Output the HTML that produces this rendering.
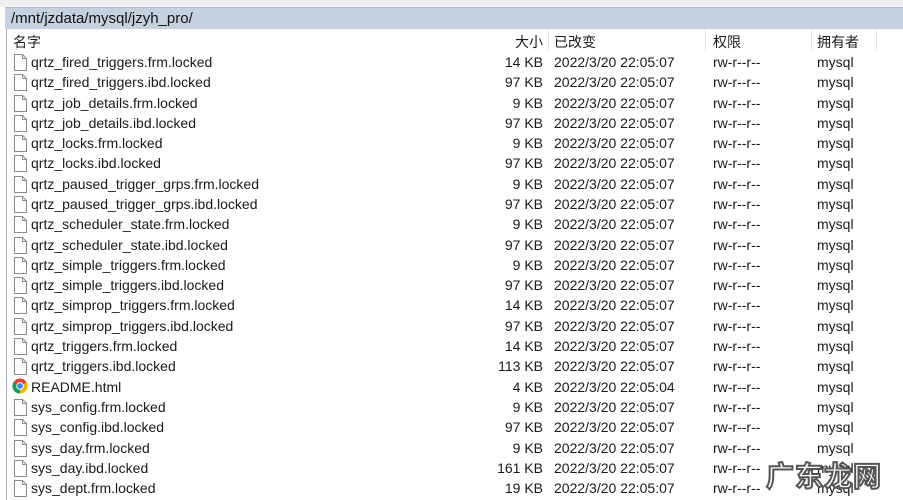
<!DOCTYPE html>
<html><head><meta charset="utf-8"><style>
*{margin:0;padding:0;box-sizing:border-box}
body{width:903px;height:500px;overflow:hidden;background:#fff;font-family:"Liberation Sans","Noto Sans CJK SC",sans-serif;font-size:14px;color:#1a1a1a;position:relative}
.tb{position:absolute;left:0;top:0;width:903px;height:7px;background:#f0f0f0}
.path{position:absolute;left:5px;top:7px;width:898px;height:22px;background:#c5d1de;border-top:1px solid #b0bccb;padding-left:6px;line-height:21px;font-size:15px;color:#111}
.panel{position:absolute;left:6px;top:29px;width:897px;height:471px;border-left:1px solid #a9b3be;background:#fff}
.hd,.r{position:absolute;left:0;height:20px;line-height:20px;white-space:nowrap}
.c1{position:absolute;left:24px}
.hd .c1{left:6px}
.c2{position:absolute;width:60px;text-align:right;left:476px}
.c3{position:absolute;left:547px}
.c4{position:absolute;left:706px}
.c5{position:absolute;left:810px}
.v{position:absolute;top:0;width:1px;height:22px;background:#e3e3e3}
.ic{position:absolute;left:7px;top:2px}
.wm{position:absolute;left:766px;top:455px;font-size:28px;font-weight:bold;color:#fff;-webkit-text-stroke:2px #555;font-family:"Noto Sans CJK SC",sans-serif;letter-spacing:1px}
</style></head><body>
<div class="tb"></div>
<div class="path">/mnt/jzdata/mysql/jzyh_pro/</div>
<div class="panel">
<div class="v" style="left:541px"></div><div class="v" style="left:698px"></div><div class="v" style="left:804px"></div><div class="v" style="left:869px"></div>
<div class="hd" style="top:3px"><span class="c1">名字</span><span class="c2">大小</span><span class="c3">已改变</span><span class="c4">权限</span><span class="c5">拥有者</span></div>
<div id="rows"></div>
</div>
<div class="wm">广东龙网</div>
<script>
var d=[["qrtz_fired_triggers.frm.locked","14 KB"],["qrtz_fired_triggers.ibd.locked","97 KB"],["qrtz_job_details.frm.locked","9 KB"],["qrtz_job_details.ibd.locked","97 KB"],["qrtz_locks.frm.locked","9 KB"],["qrtz_locks.ibd.locked","97 KB"],["qrtz_paused_trigger_grps.frm.locked","9 KB"],["qrtz_paused_trigger_grps.ibd.locked","97 KB"],["qrtz_scheduler_state.frm.locked","9 KB"],["qrtz_scheduler_state.ibd.locked","97 KB"],["qrtz_simple_triggers.frm.locked","9 KB"],["qrtz_simple_triggers.ibd.locked","97 KB"],["qrtz_simprop_triggers.frm.locked","14 KB"],["qrtz_simprop_triggers.ibd.locked","97 KB"],["qrtz_triggers.frm.locked","14 KB"],["qrtz_triggers.ibd.locked","113 KB"],["README.html","4 KB"],["sys_config.frm.locked","9 KB"],["sys_config.ibd.locked","97 KB"],["sys_day.frm.locked","9 KB"],["sys_day.ibd.locked","161 KB"],["sys_dept.frm.locked","19 KB"]];
var h="";
var file='<svg class="ic" width="13" height="17" viewBox="0 0 13 17"><path d="M0.5 0.5H8.5L12.5 4.5V16.5H0.5Z" fill="#fff" stroke="#8a8a8a"/><path d="M8.5 0.5V4.5H12.5" fill="none" stroke="#8a8a8a"/></svg>';
var chrome='<svg class="ic" style="left:5px;top:1px" width="16" height="16" viewBox="0 0 16 16"><circle cx="8" cy="8" r="7.5" fill="#db4437"/><path d="M8 8L1.5 4.2A7.5 7.5 0 0 0 8 15.5Z" fill="#0f9d58"/><path d="M8 8L14.5 4.2A7.5 7.5 0 0 1 8 15.5Z" fill="#f4b400"/><circle cx="8" cy="8" r="3.8" fill="#fff"/><circle cx="8" cy="8" r="2.9" fill="#4285f4"/></svg>';
for(var i=0;i<d.length;i++){var t=23+i*20.29;
h+='<div class="r" style="top:'+t+'px;width:897px">'+(d[i][0]=="README.html"?chrome:file)+'<span class="c1">'+d[i][0]+'</span><span class="c2">'+d[i][1]+'</span><span class="c3">'+(d[i][0]=="README.html"?"2022/3/20 22:05:04":"2022/3/20 22:05:07")+'</span><span class="c4">rw-r--r--</span><span class="c5">mysql</span></div>';}
document.getElementById("rows").innerHTML=h;
</script>
</body></html>
